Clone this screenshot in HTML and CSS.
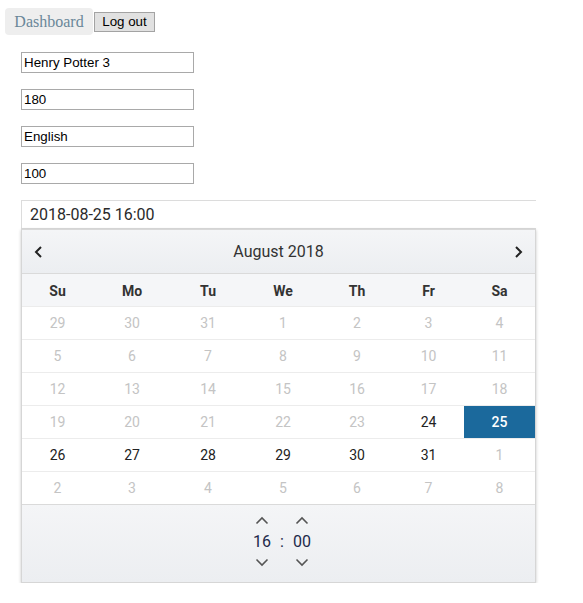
FILE: index.html
```html
<!DOCTYPE html>
<html>
<head>
<meta charset="utf-8">
<link rel="stylesheet" href="styles.css">
</head>
<body>
<nav class="nav">
  <a class="nav-link">Dashboard</a><button class="btn">Log out</button>
</nav>
<form class="form">
  <input class="field" type="text" value="Henry Potter 3">
  <input class="field" type="text" value="180">
  <input class="field" type="text" value="English">
  <input class="field" type="text" value="100">
  <div class="picker">
    <div class="picker-input">2018-08-25 16:00</div>
    <div class="cal">
      <div class="cal-head">
        <svg class="nav-arrow" width="10" height="14" viewBox="0 0 10 14"><polyline points="7,2 2,7 7,12" fill="none" stroke="#222" stroke-width="2"/></svg>
        <span class="month">August 2018</span>
        <svg class="nav-arrow" width="10" height="14" viewBox="0 0 10 14"><polyline points="3,2 8,7 3,12" fill="none" stroke="#222" stroke-width="2"/></svg>
      </div>
      <div class="weekdays">
        <span>Su</span><span>Mo</span><span>Tu</span><span>We</span><span>Th</span><span>Fr</span><span>Sa</span>
      </div>
      <div class="week"><span class="off">29</span><span class="off">30</span><span class="off">31</span><span class="off">1</span><span class="off">2</span><span class="off">3</span><span class="off">4</span></div>
      <div class="week"><span class="off">5</span><span class="off">6</span><span class="off">7</span><span class="off">8</span><span class="off">9</span><span class="off">10</span><span class="off">11</span></div>
      <div class="week"><span class="off">12</span><span class="off">13</span><span class="off">14</span><span class="off">15</span><span class="off">16</span><span class="off">17</span><span class="off">18</span></div>
      <div class="week"><span class="off">19</span><span class="off">20</span><span class="off">21</span><span class="off">22</span><span class="off">23</span><span>24</span><span class="sel">25</span></div>
      <div class="week"><span>26</span><span>27</span><span>28</span><span>29</span><span>30</span><span>31</span><span class="off">1</span></div>
      <div class="week"><span class="off">2</span><span class="off">3</span><span class="off">4</span><span class="off">5</span><span class="off">6</span><span class="off">7</span><span class="off">8</span></div>
      <div class="time">
        <div class="tcol">
          <svg width="14" height="9" viewBox="0 0 14 9"><polyline points="1.5,7.5 7,2 12.5,7.5" fill="none" stroke="#555" stroke-width="1.6"/></svg>
          <span class="tnum">16</span>
          <svg width="14" height="9" viewBox="0 0 14 9"><polyline points="1.5,1.5 7,7 12.5,1.5" fill="none" stroke="#555" stroke-width="1.6"/></svg>
        </div>
        <span class="tsep">:</span>
        <div class="tcol">
          <svg width="14" height="9" viewBox="0 0 14 9"><polyline points="1.5,7.5 7,2 12.5,7.5" fill="none" stroke="#555" stroke-width="1.6"/></svg>
          <span class="tnum">00</span>
          <svg width="14" height="9" viewBox="0 0 14 9"><polyline points="1.5,1.5 7,7 12.5,1.5" fill="none" stroke="#555" stroke-width="1.6"/></svg>
        </div>
      </div>
    </div>
  </div>
</form>
</body>
</html>
```
FILE: styles.css
```css
html, body { margin: 0; padding: 0; background: #fff; }
body { font-family: "Liberation Sans", Arial, sans-serif; }

.nav {
  display: flex;
  align-items: center;
  padding: 8px 0 0 5px;
  height: 27px;
}
.nav-link {
  display: inline-flex;
  align-items: center;
  justify-content: center;
  width: 88px;
  height: 27px;
  background: #eeeeee;
  border-radius: 4px;
  font-family: "Liberation Serif", "Times New Roman", serif;
  font-size: 16px;
  color: #6a8799;
  box-sizing: border-box;
}
.btn {
  margin-left: 1px;
  height: 20px;
  width: 61px;
  padding: 0;
  font-family: "Liberation Sans", Arial, sans-serif;
  font-size: 13.33px;
  color: #000;
  background: #e1e1e1;
  border: 1px solid #a3a3a3;
  border-radius: 0;
  box-sizing: border-box;
}

.form {
  display: flex;
  flex-direction: column;
  align-items: flex-start;
  gap: 16px;
  padding: 17px 0 0 21px;
  margin: 0;
}
.field {
  width: 173px;
  height: 21px;
  box-sizing: border-box;
  margin: 0;
  border: 1px solid #a9a9a9;
  padding: 1px 2px;
  font-family: "Liberation Sans", Arial, sans-serif;
  font-size: 13.33px;
  color: #000;
  outline: none;
}

.picker {
  width: 515px;
  font-family: Roboto, "Liberation Sans", sans-serif;
}
.picker-input {
  height: 29px;
  box-sizing: border-box;
  border: 1px solid #dcdcdc;
  border-right: none;
  padding: 0 0 0 8px;
  display: flex;
  align-items: center;
  font-size: 16px;
  color: #2a2a2a;
}
.cal {
  border: 1px solid #d6d6d6;
  border-top: none;
  box-shadow: 0 1px 3px rgba(0,0,0,0.22);
  background: #fff;
  width: 515px;
  box-sizing: border-box;
}
.cal-head {
  height: 45px;
  box-sizing: border-box;
  display: flex;
  align-items: center;
  justify-content: space-between;
  padding: 0 12px 0 12px;
  background: linear-gradient(#f4f5f7, #eceef1);
  border-top: 1px solid #d8d8d8;
  border-bottom: 1px solid #dadada;
}
.month { font-size: 16px; color: #333; }

.weekdays, .week {
  display: grid;
  grid-template-columns: 71px 78px 74px 76px 72px 71px 71px;
}
.weekdays {
  height: 32px;
  box-sizing: border-box;
  padding-top: 2px;
  background: #f5f6f8;
  align-items: center;
  text-align: center;
  font-size: 14px;
  font-weight: 700;
  color: #333;
}
.week {
  height: 33px;
  box-sizing: border-box;
  border-top: 1px solid #ececec;
}
.week:first-of-type { border-top: none; }
.week span {
  display: flex;
  align-items: center;
  justify-content: center;
  font-size: 14px;
  color: #222;
}
.week span.off { color: #c4c4c4; }
.week span.sel {
  background: #1b699c;
  color: #fff;
  font-weight: 500;
}

.time {
  height: 78px;
  box-sizing: border-box;
  border-top: 1px solid #dadada;
  background: linear-gradient(#f4f5f7, #eceef1);
  display: flex;
  justify-content: center;
  align-items: center;
  gap: 6px;
  padding: 0 0 4px 7px;
}
.tcol {
  display: flex;
  flex-direction: column;
  align-items: center;
  gap: 7px;
  width: 24px;
}
.tnum { font-size: 16px; color: #1d2a4a; line-height: 19px; }
.tsep { font-size: 16px; color: #1d2a4a; }
```
